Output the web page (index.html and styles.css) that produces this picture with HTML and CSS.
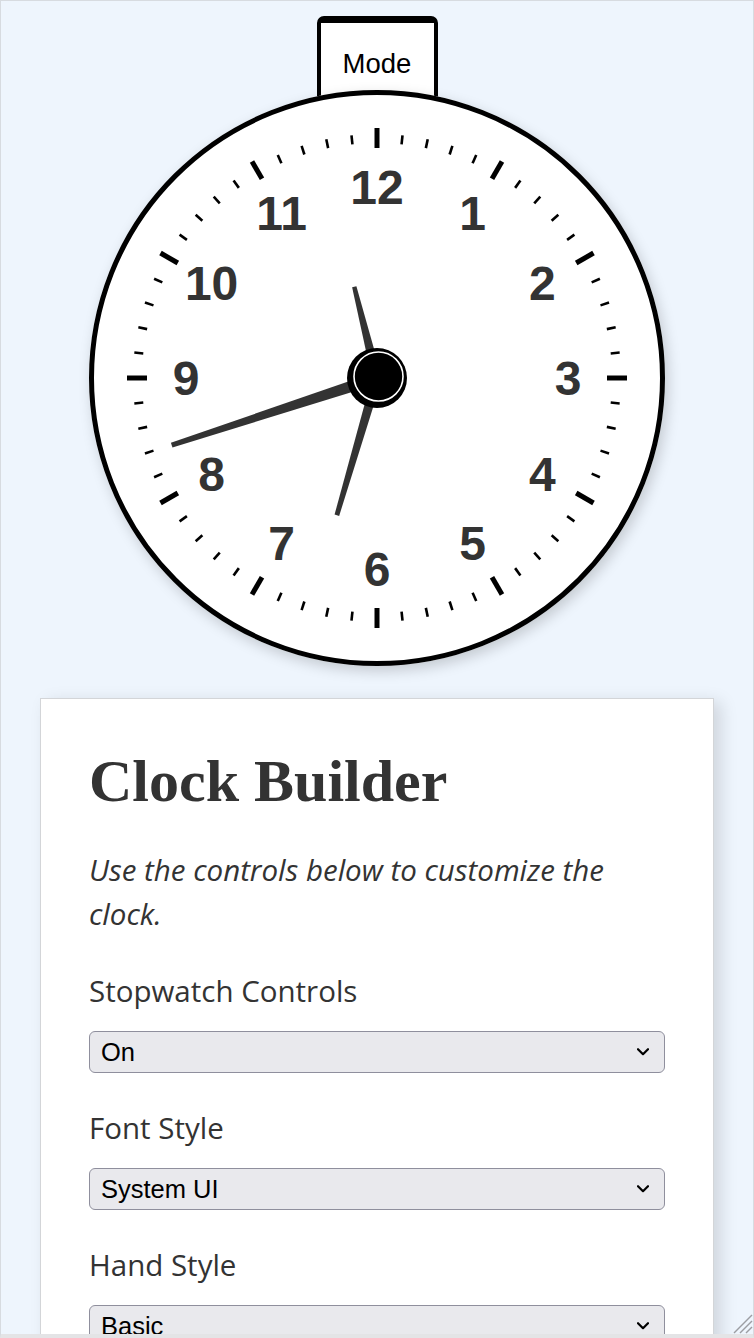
FILE: index.html
```html
<!DOCTYPE html>
<html lang="en">
<head>
<meta charset="utf-8">
<title>Clock Builder</title>
<link rel="stylesheet" href="styles.css">
</head>
<body>
<div class="frame">
  <div class="stage">
    <div class="mode-tab">Mode</div>
    <div class="clock">
      <svg class="face" viewBox="0 0 576 576" width="576" height="576">
        <defs>
          <line id="tm" x1="288" y1="44" x2="288" y2="53"/>
          <line id="tM" x1="288" y1="38" x2="288" y2="58"/>
        </defs>
        <circle class="rim" cx="288" cy="288" r="285.5"/>
        <g class="minor">
          <use href="#tm" transform="rotate(6 288 288)"/><use href="#tm" transform="rotate(12 288 288)"/><use href="#tm" transform="rotate(18 288 288)"/><use href="#tm" transform="rotate(24 288 288)"/>
          <use href="#tm" transform="rotate(36 288 288)"/><use href="#tm" transform="rotate(42 288 288)"/><use href="#tm" transform="rotate(48 288 288)"/><use href="#tm" transform="rotate(54 288 288)"/>
          <use href="#tm" transform="rotate(66 288 288)"/><use href="#tm" transform="rotate(72 288 288)"/><use href="#tm" transform="rotate(78 288 288)"/><use href="#tm" transform="rotate(84 288 288)"/>
          <use href="#tm" transform="rotate(96 288 288)"/><use href="#tm" transform="rotate(102 288 288)"/><use href="#tm" transform="rotate(108 288 288)"/><use href="#tm" transform="rotate(114 288 288)"/>
          <use href="#tm" transform="rotate(126 288 288)"/><use href="#tm" transform="rotate(132 288 288)"/><use href="#tm" transform="rotate(138 288 288)"/><use href="#tm" transform="rotate(144 288 288)"/>
          <use href="#tm" transform="rotate(156 288 288)"/><use href="#tm" transform="rotate(162 288 288)"/><use href="#tm" transform="rotate(168 288 288)"/><use href="#tm" transform="rotate(174 288 288)"/>
          <use href="#tm" transform="rotate(186 288 288)"/><use href="#tm" transform="rotate(192 288 288)"/><use href="#tm" transform="rotate(198 288 288)"/><use href="#tm" transform="rotate(204 288 288)"/>
          <use href="#tm" transform="rotate(216 288 288)"/><use href="#tm" transform="rotate(222 288 288)"/><use href="#tm" transform="rotate(228 288 288)"/><use href="#tm" transform="rotate(234 288 288)"/>
          <use href="#tm" transform="rotate(246 288 288)"/><use href="#tm" transform="rotate(252 288 288)"/><use href="#tm" transform="rotate(258 288 288)"/><use href="#tm" transform="rotate(264 288 288)"/>
          <use href="#tm" transform="rotate(276 288 288)"/><use href="#tm" transform="rotate(282 288 288)"/><use href="#tm" transform="rotate(288 288 288)"/><use href="#tm" transform="rotate(294 288 288)"/>
          <use href="#tm" transform="rotate(306 288 288)"/><use href="#tm" transform="rotate(312 288 288)"/><use href="#tm" transform="rotate(318 288 288)"/><use href="#tm" transform="rotate(324 288 288)"/>
          <use href="#tm" transform="rotate(336 288 288)"/><use href="#tm" transform="rotate(342 288 288)"/><use href="#tm" transform="rotate(348 288 288)"/><use href="#tm" transform="rotate(354 288 288)"/>
        </g>
        <g class="major">
          <use href="#tM"/><use href="#tM" transform="rotate(30 288 288)"/><use href="#tM" transform="rotate(60 288 288)"/><use href="#tM" transform="rotate(90 288 288)"/>
          <use href="#tM" transform="rotate(120 288 288)"/><use href="#tM" transform="rotate(150 288 288)"/><use href="#tM" transform="rotate(180 288 288)"/><use href="#tM" transform="rotate(210 288 288)"/>
          <use href="#tM" transform="rotate(240 288 288)"/><use href="#tM" transform="rotate(270 288 288)"/><use href="#tM" transform="rotate(300 288 288)"/><use href="#tM" transform="rotate(330 288 288)"/>
        </g>
        <g class="numerals">
          <text x="288" y="114">12</text>
          <text x="383.5" y="139.6">1</text>
          <text x="453.4" y="209.5">2</text>
          <text x="479" y="305">3</text>
          <text x="453.4" y="400.5">4</text>
          <text x="383.5" y="470.4">5</text>
          <text x="288" y="496">6</text>
          <text x="192.5" y="470.4">7</text>
          <text x="122.6" y="400.5">8</text>
          <text x="97" y="305">9</text>
          <text x="122.6" y="209.5">10</text>
          <text x="192.5" y="139.6">11</text>
        </g>
        <g class="hands" transform="translate(288 288)">
          <polygon points="-5,0 5,0 2.2,-94 -2.2,-94" transform="rotate(346)"/>
          <polygon points="-6,0 6,0 2.5,-216 -2.5,-216" transform="rotate(251.9)"/>
          <polygon points="-5,0 5,0 2.4,-143 -2.4,-143" transform="rotate(196.3)"/>
        </g>
        <circle cx="288" cy="288" r="30" fill="#000"/>
        <circle cx="289.5" cy="286.5" r="24.5" fill="#000" stroke="#fff" stroke-width="1.6"/>
      </svg>
    </div>
  </div>

  <section class="card">
    <h1 class="card-title">Clock Builder</h1>
    <p class="lede">Use the controls below to customize the clock.</p>

    <div class="field">
      <label class="field-label" for="sw">Stopwatch Controls</label>
      <div class="select-wrap">
        <select id="sw" class="select"><option>On</option><option>Off</option></select>
        <svg class="chev" viewBox="0 0 12 8" width="12" height="8"><path d="M1 1.2 L6 6.2 L11 1.2"/></svg>
      </div>
    </div>

    <div class="field">
      <label class="field-label" for="fs">Font Style</label>
      <div class="select-wrap">
        <select id="fs" class="select"><option>System UI</option><option>Serif</option><option>Monospace</option></select>
        <svg class="chev" viewBox="0 0 12 8" width="12" height="8"><path d="M1 1.2 L6 6.2 L11 1.2"/></svg>
      </div>
    </div>

    <div class="field">
      <label class="field-label" for="hs">Hand Style</label>
      <div class="select-wrap">
        <select id="hs" class="select"><option>Basic</option><option>Fancy</option></select>
        <svg class="chev" viewBox="0 0 12 8" width="12" height="8"><path d="M1 1.2 L6 6.2 L11 1.2"/></svg>
      </div>
    </div>
  </section>

  <svg class="grip" viewBox="0 0 22 22" width="22" height="22" aria-hidden="true">
    <line x1="3" y1="21" x2="21" y2="3"/>
    <line x1="9" y1="21" x2="21" y2="9"/>
    <line x1="15" y1="21" x2="21" y2="15"/>
  </svg>
</div>
</body>
</html>
```

FILE: styles.css
```css
* { box-sizing: border-box; }

html, body {
  margin: 0;
  padding: 0;
  background: #ffffff;
}

.frame {
  position: relative;
  width: 754px;
  height: 1338px;
  border: 1px solid #d7dbe0;
  border-bottom: 4px solid #e4e4e6;
  background: #eef5fd;
  overflow: hidden;
  padding-top: 15px;
}

.stage {
  display: flex;
  flex-direction: column;
  align-items: center;
}

.mode-tab {
  width: 121px;
  height: 100px;
  border: 4px solid #000;
  border-top-width: 7px;
  border-radius: 7px 7px 0 0;
  background: #fff;
  color: #000;
  font-family: "Liberation Sans", Arial, sans-serif;
  font-size: 27.5px;
  line-height: 32px;
  text-align: center;
  padding-top: 25px;
}

.clock {
  width: 576px;
  height: 576px;
  margin-top: -26px;
  border-radius: 50%;
  background: #fff;
  box-shadow: 3px 5px 14px rgba(0, 0, 0, 0.18);
  position: relative;
  z-index: 1;
}

.face { display: block; }

.rim {
  fill: #fff;
  stroke: #000;
  stroke-width: 5;
}

.minor use { stroke: #000; stroke-width: 2.6; }
.major use { stroke: #000; stroke-width: 5; }

.numerals text {
  font-family: "Liberation Sans", Arial, sans-serif;
  font-weight: 700;
  font-size: 48px;
  fill: #333;
  text-anchor: middle;
}

.hands polygon { fill: #333; }

.card {
  width: 674px;
  margin: 32px auto 0;
  background: #fff;
  border: 1px solid #d3d5d8;
  box-shadow: 7px 4px 16px rgba(0, 0, 0, 0.13);
  padding: 46px 48px;
  color: #333;
}

.card-title {
  margin: 0;
  font-family: "Liberation Serif", "Times New Roman", serif;
  font-weight: 700;
  font-size: 60px;
  line-height: 72px;
  color: #333;
}

.lede {
  margin: 31px 0 0;
  font-family: "Open Sans", sans-serif;
  font-style: italic;
  font-size: 29.5px;
  line-height: 44px;
  color: #333;
}

.field { margin-top: 35px; }

.field-label {
  display: block;
  font-family: "Open Sans", sans-serif;
  font-size: 29.5px;
  line-height: 40px;
  color: #333;
}

.select-wrap {
  display: grid;
  margin-top: 20px;
}

.select {
  grid-area: 1 / 1;
  -webkit-appearance: none;
  appearance: none;
  width: 100%;
  height: 42px;
  margin: 0;
  padding: 0 40px 0 11px;
  background: #e9e9ed;
  border: 1.5px solid #8f8f9d;
  border-radius: 6px;
  color: #000;
  font-family: "Liberation Sans", Arial, sans-serif;
  font-size: 25.5px;
}

.chev {
  grid-area: 1 / 1;
  justify-self: end;
  align-self: center;
  margin-right: 16px;
  pointer-events: none;
}

.chev path {
  fill: none;
  stroke: #000;
  stroke-width: 2.2;
  stroke-linecap: round;
  stroke-linejoin: round;
}

.grip {
  position: absolute;
  right: 0;
  bottom: 0;
  z-index: 2;
}

.grip line {
  stroke: #9c9ea3;
  stroke-width: 1.5;
}
```
